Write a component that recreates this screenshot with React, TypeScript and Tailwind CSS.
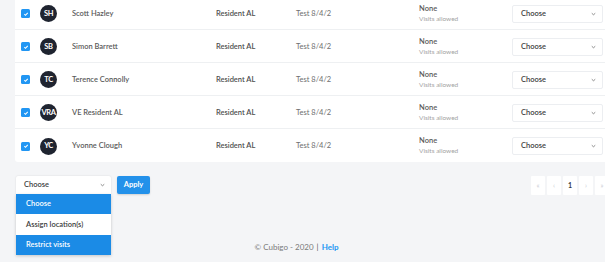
import React from 'react';

const residents = [
  { initials: 'SH', name: 'Scott Hazley' },
  { initials: 'SB', name: 'Simon Barrett' },
  { initials: 'TC', name: 'Terence Connolly' },
  { initials: 'VRA', name: 'VE Resident AL' },
  { initials: 'YC', name: 'Yvonne Clough' },
];

const Chevron = ({ className = '' }: { className?: string }) => (
  <svg viewBox="0 0 10 6" className={className} fill="none" stroke="currentColor" strokeWidth="1.6">
    <path d="M1.5 1.5 5 4.5 8.5 1.5" />
  </svg>
);

const Check = () => (
  <span className="flex h-[9px] w-[9px] items-center justify-center rounded-[1.5px] bg-[#2196f3]">
    <svg viewBox="0 0 8 8" className="h-[6px] w-[6px]" fill="none" stroke="white" strokeWidth="1.4">
      <path d="M1.8 4.3 3.3 5.7 6.3 2.4" />
    </svg>
  </span>
);

const Row = ({ initials, name }: { initials: string; name: string }) => (
  <div className="flex h-[33px] items-center border-b border-[#eef0f2] pl-[6px] pt-[1px] last:border-b-0">
    <Check />
    {/* avatar */}
    <div className="ml-[10px] flex h-[17px] w-[17px] shrink-0 items-center justify-center rounded-full bg-[#1f2430] text-[7.5px] font-bold tracking-[-0.4px] text-white">
      {initials}
    </div>
    <div className="ml-[15px] w-[144px] text-[7.5px] font-semibold text-[#5a5a5a]">{name}</div>
    <div className="w-[80px] text-[7.5px] font-semibold text-[#4e4e4e]">Resident AL</div>
    <div className="w-[123px] text-[7.5px] text-[#6e6e6e]">Test 8/4/2</div>
    <div className="flex w-[93px] flex-col leading-[10px]">
      <span className="text-[7.5px] font-semibold text-[#5a5a5a]">None</span>
      <span className="text-[6.5px] text-[#a3a3a3]">Visits allowed</span>
    </div>
    <div className="flex h-[18px] w-[91px] shrink-0 items-center justify-between rounded-[2px] border border-[#eceef1] bg-white pl-[8px] pr-[6px]">
      <span className="text-[7.5px] font-semibold text-[#404040]">Choose</span>
      <Chevron className="h-[4px] w-[5px] text-[#6e6e6e]" />
    </div>
  </div>
);

const pages = ['«', '‹', '1', '›', '»'];

export default function App() {
  return (
    <div className="h-[262px] w-[605px] overflow-hidden bg-[#f4f5f7] font-['Lato',sans-serif]">
      {/* residents table */}
      <div className="-mt-[3px] ml-[15px] w-[620px] rounded-[3px] bg-white">
        {residents.map((r) => (
          <Row key={r.initials} {...r} />
        ))}
      </div>

      {/* bulk actions + pagination */}
      <div className="mt-[14px] flex items-start">
        <div className="relative ml-[16px]">
          <div className="flex h-[18px] w-[95px] items-center justify-between rounded-t-[2px] bg-white pl-[8px] pr-[6px] shadow-[0_0_2px_rgba(0,0,0,0.12)]">
            <span className="text-[7.5px] font-semibold text-[#404040]">Choose</span>
            <Chevron className="h-[4px] w-[5px] text-[#6e6e6e]" />
          </div>
          <div className="absolute left-0 top-[18px] z-10 flex w-[95px] flex-col bg-white shadow-[0_1px_3px_rgba(0,0,0,0.2)]">
            <div className="flex h-[20px] items-center bg-[#1b8be6] pl-[10px] text-[7.5px] font-semibold text-white">Choose</div>
            <div className="flex h-[21px] items-center pl-[10px] text-[7.5px] font-semibold text-[#404040]">Assign location(s)</div>
            <div className="flex h-[20px] items-center bg-[#1b8be6] pl-[10px] text-[7.5px] font-semibold text-white">Restrict visits</div>
          </div>
        </div>
        <button className="ml-[6px] flex h-[18px] w-[33px] items-center justify-center rounded-[2px] bg-[#2391ea] text-[7.5px] font-bold text-white shadow-[0_1px_2px_rgba(0,0,0,0.15)]">
          Apply
        </button>
        <div className="ml-auto mr-[-4px] flex gap-[2px]">
          {pages.map((p) => (
            <div
              key={p}
              className={`flex h-[19px] w-[14px] items-center justify-center rounded-[1px] bg-white text-[7px] ${
                p === '1' ? 'font-bold text-[#333a45]' : 'text-[#c9cdd3]'
              }`}
            >
              {p}
            </div>
          ))}
        </div>
      </div>

      {/* footer */}
      <div className="mt-[46px] flex justify-center pr-[12px] text-[8px] text-[#7a7a7a]">
        <span>© Cubigo - 2020</span>
        <span className="mx-[3px] text-[#555]">|</span>
        <span className="font-bold text-[#2196f3]">Help</span>
      </div>
    </div>
  );
}
